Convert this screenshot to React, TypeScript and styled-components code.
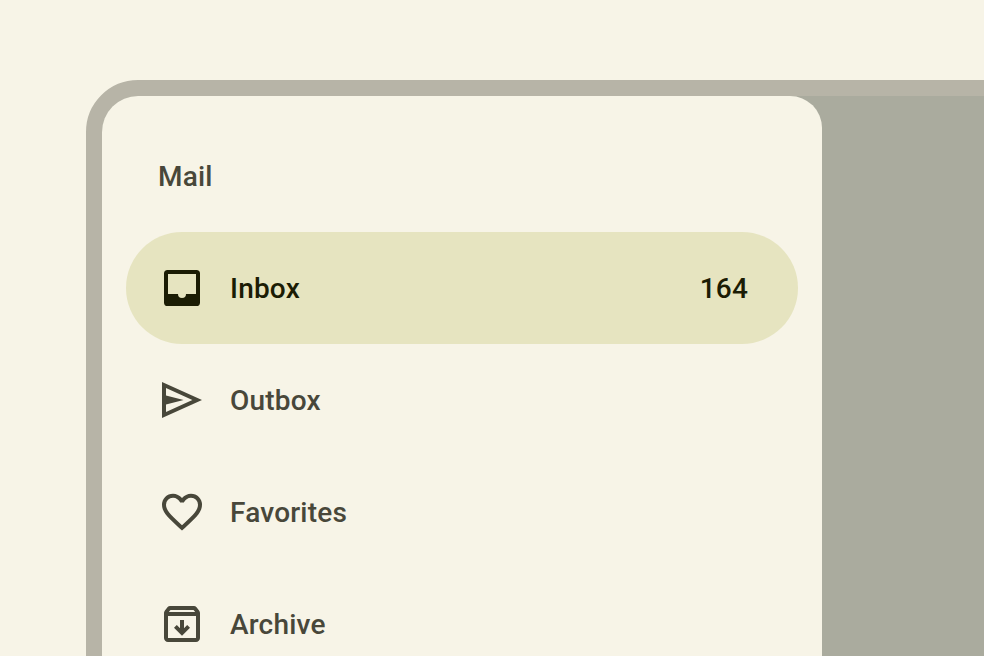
import React from "react";
import styled, { createGlobalStyle } from "styled-components";

const GlobalStyle = createGlobalStyle`
  body { margin: 0; background: #f7f4e7; overflow: hidden; font-family: Roboto, "Liberation Sans", sans-serif; }
`;
const Page = styled.main`
  box-sizing: border-box;
  height: 656px;
  padding: 80px 0 0 86px;
  overflow: hidden;
  background: #f7f4e7;
`;
const Device = styled.div`
  box-sizing: border-box;
  width: 1100px;
  height: 900px;
  border: 16px solid #b7b4a7;
  border-radius: 52px;
  background: #aaab9e;
`;
const Drawer = styled.nav`
  box-sizing: border-box;
  width: 720px;
  height: 100%;
  padding: 24px;
  border-radius: 36px 32px 32px 36px;
  background: #f7f4e7;
`;
const Headline = styled.h2`
  box-sizing: border-box;
  margin: 0;
  padding: 1px 32px 0;
  height: 112px;
  font-size: 28px;
  font-weight: 500;
  line-height: 112px;
  letter-spacing: 0.2px;
  color: #48473a;
`;
const Item = styled.a<{ $active?: boolean }>`
  box-sizing: border-box;
  display: flex;
  align-items: center;
  gap: 24px;
  height: 112px;
  padding: 0 50px 0 32px;
  border-radius: 56px;
  font-size: 28px;
  font-weight: 500;
  letter-spacing: 0.2px;
  color: ${(p) => (p.$active ? "#1b1c04" : "#48473a")};
  background: ${(p) => (p.$active ? "#e6e4c0" : "transparent")};
`;
const Label = styled.span`
  flex: 1;
`;
const Icon = styled.svg`
  width: 48px;
  height: 48px;
  fill: currentColor;
`;

const SMALL_GRID = "0 0 24 24";
const LARGE_GRID = "0 -971 960 960";

const items = [
  { label: "Inbox", badge: "164", grid: SMALL_GRID, path: "M4.800 3h14.400A1.800 1.800 0 0 1 21 4.800v14.400a1.800 1.800 0 0 1-1.800 1.800H4.800A1.800 1.800 0 0 1 3 19.200V4.800A1.800 1.800 0 0 1 4.800 3zM5 5v10h5a2 2 0 0 0 4 0h5V5z" },
  { label: "Outbox", grid: SMALL_GRID, path: "M2 21V3l20 9zM4 18l13.200-6L4 6v3.700L12.800 12 4 14.300z" },
  { label: "Favorites", grid: LARGE_GRID, path: "m480-120-58-52q-101-91-167-157T150-447.500Q111-500 95.500-544T80-634q0-94 63-157t157-63q52 0 99 22t81 62q34-40 81-62t99-22q94 0 157 63t63 157q0 46-15.500 90T810-447.500Q771-395 705-329T538-172l-58 52Zm0-108q96-86 158-147.500t98-107q36-45.500 50-81t14-70.500q0-60-40-100t-100-40q-47 0-87 26.500T518-680h-76q-15-41-55-67.500T300-774q-60 0-100 40t-40 100q0 35 14 70.500t50 81q36 45.500 98 107T480-228Z" },
  { label: "Archive", grid: SMALL_GRID, path: "M20.540 5.230l-1.390-1.680C18.880 3.210 18.470 3 18 3H6c-.470 0-.880.210-1.160.550L3.460 5.230C3.170 5.570 3 6.020 3 6.500V19c0 1.100.900 2 2 2h14c1.100 0 2-.900 2-2V6.500c0-.480-.170-.930-.460-1.270zM6.240 5h11.520l.840 1H5.400L6.240 5zM5 19V8h14v11H5zM12 17.900l4-4-1.400-1.400-1.600 1.600V10h-2v4.100l-1.600-1.600L8 13.900z" },
];

export default function App() {
  return (
    <Page>
      <GlobalStyle />
      <Device>
        <Drawer>
          <Headline>Mail</Headline>
          {items.map((item) => (
            <Item key={item.label} $active={item.label === "Inbox"}>
              <Icon viewBox={item.grid}><path fillRule="evenodd" d={item.path} /></Icon>
              <Label>{item.label}</Label>
              {item.badge && <span>{item.badge}</span>}
            </Item>
          ))}
        </Drawer>
      </Device>
    </Page>
  );
}
